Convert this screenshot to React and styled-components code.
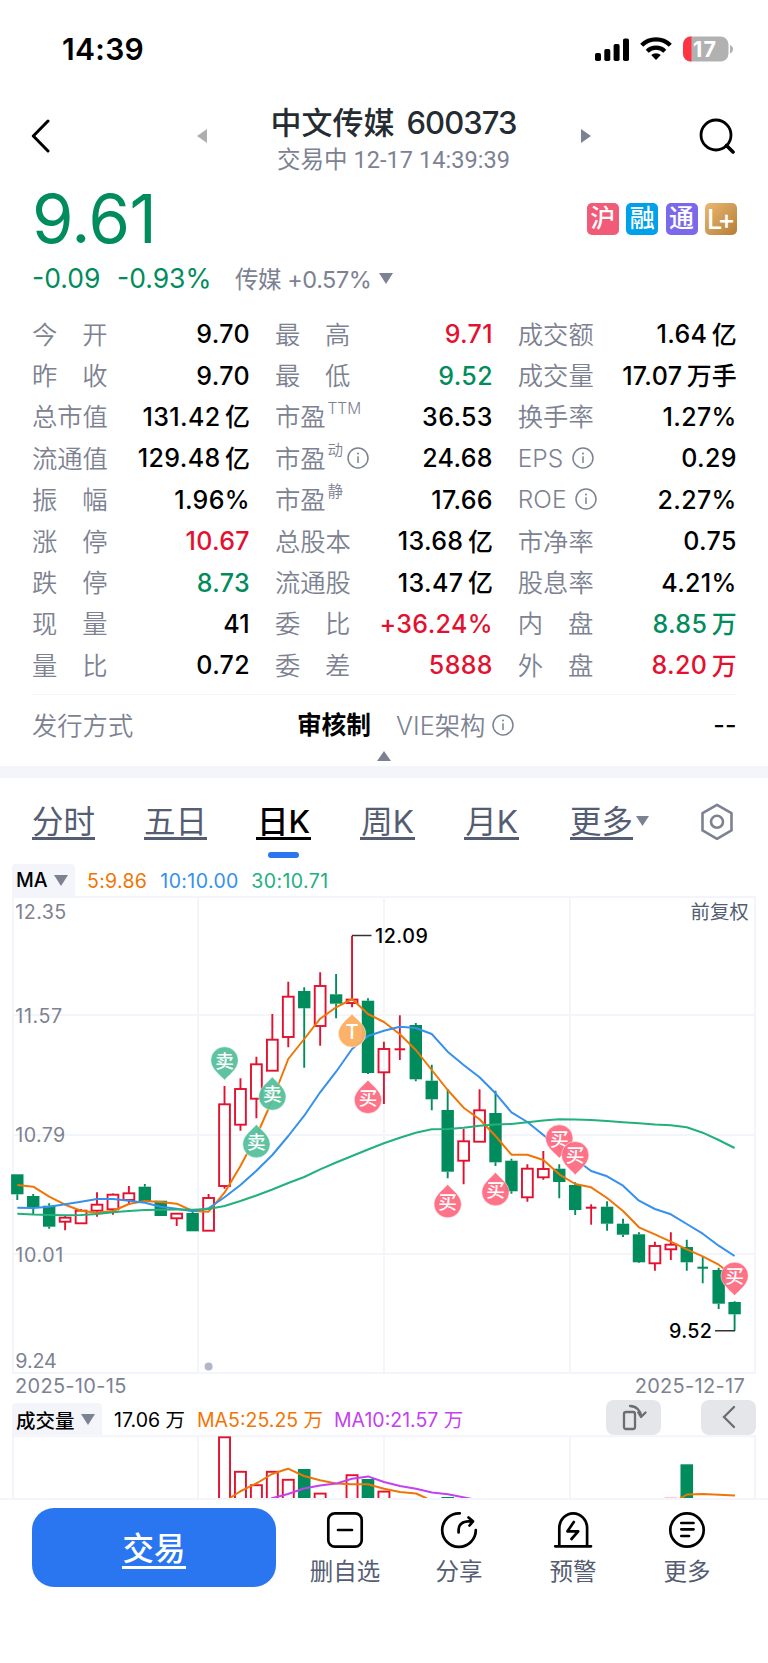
import React from 'react';
import styled, { createGlobalStyle } from 'styled-components';

const C = {
  green: '#008c5c',
  red: '#e3112f',
  ink: '#000',
  title: '#252c31',
  gray: '#7d8292',
  slate: '#555d73',
  line: '#f4f5fa',
  blue: '#2a75f0',
  orange: '#ef7606',
  sky: '#3590ee',
  teal: '#22b07d',
  purple: '#c341f0',
};

const Global = createGlobalStyle`
  * { box-sizing: border-box; }
  body { margin: 0; background: #fff; overflow: hidden; }
  svg { display: block; flex: none; }
  svg text { font-family: Inter, "Noto Sans CJK SC", sans-serif; }
`;

const Page = styled.div`
  width: 768px;
  height: 1663px;
  overflow: hidden;
  display: flex;
  flex-direction: column;
  background: #fff;
  color: ${C.ink};
  font-family: Inter, "Noto Sans CJK SC", sans-serif;
  white-space: nowrap;
`;

const StatusBar = styled.div`
  height: 98px;
  flex: none;
  display: flex;
  justify-content: space-between;
  align-items: center;
  padding: 0 34px 0 62px;
`;
const Clock = styled.span`
  font-size: 30px;
  font-weight: 600;
  letter-spacing: 0.3px;
`;
const StatusIcons = styled.div`
  display: flex;
  align-items: center;
  gap: 11px;
`;

const Header = styled.header`
  height: 86px;
  flex: none;
  display: flex;
  align-items: center;
  justify-content: space-between;
  padding: 0 33px 10px 31px;
`;
const Switcher = styled.div`
  width: 394px;
  display: flex;
  align-items: center;
  justify-content: space-between;
  margin-left: 37px;
`;
const TitleBlock = styled.div`
  display: flex;
  flex-direction: column;
  align-items: center;
  padding-top: 8px;
`;
const Title = styled.h1`
  display: flex;
  gap: 12px;
  margin: 0;
  font-size: 31px;
  line-height: 40px;
  font-weight: 500;
  color: ${C.title};
`;
const Code = styled.span`
  letter-spacing: -0.9px;
`;
const Subtitle = styled.div`
  font-family: Roboto, "Noto Sans CJK SC", sans-serif;
  font-size: 23.5px;
  line-height: 34px;
  color: ${C.gray};
  letter-spacing: 0.05px;
`;

const Quote = styled.section`
  height: 129px;
  flex: none;
  padding: 0 31px 0 32px;
`;
const PriceLine = styled.div`
  height: 70px;
  display: flex;
  align-items: center;
  justify-content: space-between;
`;
const Price = styled.span`
  font-size: 67px;
  line-height: 70px;
  color: ${C.green};
  letter-spacing: -0.5px;
`;
const Badges = styled.div`
  display: flex;
  gap: 7.4px;
`;
const Badge = styled.span`
  width: 32px;
  height: 32px;
  border-radius: 5px;
  background: ${(p) => p.$bg};
  color: #fff;
  font-size: ${(p) => (p.$tight ? 27 : 25)}px;
  line-height: ${(p) => (p.$tight ? 34 : 31)}px;
  font-weight: 500;
  letter-spacing: ${(p) => (p.$tight ? '-2.5px' : '0')};
  text-indent: ${(p) => (p.$tight ? '-2px' : '0')};
  text-align: center;
`;
const ChangeLine = styled.div`
  height: 48px;
  display: flex;
  align-items: center;
  color: ${C.green};
  font-size: 26.5px;
`;
const Change = styled.span`
  width: ${(p) => p.$w}px;
`;
const Sector = styled.span`
  display: flex;
  align-items: center;
  gap: 8px;
  color: ${C.gray};
  font-size: 23.5px;
  letter-spacing: -0.45px;
`;

const Stats = styled.section`
  flex: none;
  display: grid;
  grid-template-columns: 218px 218px 219px;
  column-gap: 24.9px;
  grid-auto-rows: 41.4px;
  padding-left: 32px;
`;
const Stat = styled.div`
  display: flex;
  align-items: center;
  justify-content: space-between;
  font-size: 25px;
`;
const Label = styled.span`
  display: flex;
  align-items: center;
  justify-content: ${(p) => (p.$spread ? 'space-between' : 'flex-start')};
  width: ${(p) => (p.$spread ? '75.5px' : 'auto')};
  color: ${C.gray};
  font-size: ${(p) => (p.$latin ? 24.5 : 25.3)}px;
  font-weight: ${(p) => (p.$latin ? 300 : 350)};
  gap: ${(p) => (p.$latin ? 8.5 : 0)}px;
`;
const Han = styled.span`
  margin-top: ${(p) => (p.$latin ? 0 : -2)}px;
`;
const Sup = styled.sup`
  font-size: 15.5px;
  line-height: 16px;
  margin: -14px 4px 0 2px;
`;
const Value = styled.span`
  color: ${(p) => p.$color || C.ink};
  font-weight: 500;
  font-size: 25px;
  letter-spacing: 0.35px;
  padding-top: 1px;
  display: flex;
  align-items: center;
  gap: 4.5px;
`;
const Unit = styled.span`
  margin-top: -3px;
  letter-spacing: 0;
`;

const Rule = styled.div`
  height: 1px;
  flex: none;
  margin: 8px 32px 0;
  background: ${C.line};
`;
const IssueRow = styled.div`
  height: 56px;
  flex: none;
  display: grid;
  grid-template-columns: 339px 1fr;
  grid-auto-rows: 60px;
  column-gap: 25px;
  padding: 0 31px 0 32px;
`;
const Bold = styled.span`
  font-weight: 600;
  font-size: 24.7px;
  margin-top: -3px;
`;
const InfoGap = styled.i`
  width: 7px;
`;
const Collapse = styled.div`
  height: 15px;
  flex: none;
  display: flex;
  justify-content: center;
  align-items: flex-start;
`;
const Band = styled.div`
  height: 12px;
  flex: none;
  background: ${C.line};
`;

const Tabs = styled.nav`
  height: 87px;
  flex: none;
  display: flex;
  align-items: flex-start;
  gap: 49px;
  padding: 24px 34px 0 32px;
`;
const Tab = styled.div`
  width: ${(p) => p.$w}px;
  display: flex;
  flex-direction: column;
  align-items: center;
  color: ${(p) => (p.$on ? C.ink : C.slate)};
  font-weight: ${(p) => (p.$on ? 500 : 400)};
  font-size: 31.5px;
`;
const TabText = styled.span`
  width: 100%;
  height: 38px;
  line-height: 40px;
  border-bottom: 3px solid currentColor;
  text-align: center;
`;
const TabMark = styled.i`
  width: 31px;
  height: 6px;
  margin-top: 12px;
  border-radius: 3px;
  background: ${C.blue};
`;
const MoreTab = styled.div`
  display: flex;
  align-items: center;
  gap: 3px;
  margin-left: 2px;
  color: ${C.slate};
  font-size: 31.5px;
`;
const Settings = styled.div`
  margin-left: auto;
`;

const Legend = styled.div`
  height: ${(p) => p.$h}px;
  flex: none;
  display: flex;
  align-items: flex-end;
  padding: 0 12px;
  font-size: 19.5px;
`;
const Picker = styled.div`
  height: 32px;
  width: ${(p) => p.$w}px;
  display: flex;
  align-items: center;
  justify-content: space-between;
  padding: 1px 7px 0 4px;
  border-radius: 4px 4px 0 0;
  background: ${C.line};
  font-weight: 500;
  margin-right: 12px;
`;
const LegendItem = styled.span`
  line-height: 30px;
  color: ${(p) => p.$color};
  width: ${(p) => p.$w}px;
  letter-spacing: ${(p) => p.$ls || 0}px;
`;
const ToolButton = styled.div`
  width: 55px;
  height: 35px;
  border-radius: 8px;
  background: #e5e6ea;
  display: flex;
  align-items: center;
  justify-content: center;
  margin-left: ${(p) => (p.$push ? 'auto' : '40px')};
`;
const Dates = styled.div`
  height: 30px;
  flex: none;
  display: flex;
  justify-content: space-between;
  padding: 0 23px 0 15px;
  color: ${C.gray};
  font-size: 20px;
  line-height: 25px;
  letter-spacing: 0.3px;
`;

const BottomBar = styled.footer`
  flex: 1;
  border-top: 2px solid ${C.line};
  background: #fff;
  display: flex;
  align-items: flex-start;
  padding: 8px 24px 0 32px;
`;
const TradeButton = styled.button`
  width: 244px;
  height: 79px;
  border: 0;
  padding: 3px 0 0 0;
  border-radius: 22px;
  background: ${C.blue};
  color: #fff;
  font: 500 31.5px/39px Inter, "Noto Sans CJK SC", sans-serif;
  margin-right: 12px;
`;
const TradeText = styled.span`
  display: inline-block;
  height: 40px;
  border-bottom: 3px solid #fff;
`;
const Action = styled.div`
  width: 114px;
  display: flex;
  flex-direction: column;
  align-items: center;
  padding-top: 3px;
  color: ${C.slate};
  font-size: 23.5px;
  line-height: 34px;
  gap: 6.5px;
`;

const Tri = ({ dir = 'down', w = 14, h = 11, color = C.gray }) => {
  const pts = {
    down: `0,0 ${w},0 ${w / 2},${h}`,
    up: `0,${h} ${w},${h} ${w / 2},0`,
    left: `${w},0 ${w},${h} 0,${h / 2}`,
    right: `0,0 0,${h} ${w},${h / 2}`,
  }[dir];
  return (
    <svg width={w} height={h}>
      <polygon points={pts} fill={color} />
    </svg>
  );
};

const Info = () => (
  <svg width="22" height="22" viewBox="0 0 22 22" fill="none" stroke={C.gray} strokeWidth="1.5">
    <circle cx="11" cy="11" r="10" />
    <path d="M11 9.2V16" />
    <circle cx="11" cy="6.6" r="1" fill={C.gray} stroke="none" />
  </svg>
);

const G = C.green;
const R = C.red;

const stats = [
  ['今开', '9.70'], ['最高', '9.71', R], ['成交额', '1.64', null, '亿'],
  ['昨收', '9.70'], ['最低', '9.52', G], ['成交量', '17.07', null, '万手'],
  ['总市值', '131.42', null, '亿'], ['市盈', '36.53', null, null, { sup: 'TTM' }], ['换手率', '1.27%'],
  ['流通值', '129.48', null, '亿'], ['市盈', '24.68', null, null, { sup: '动', info: true }], ['EPS', '0.29', null, null, { latin: true, info: true }],
  ['振幅', '1.96%'], ['市盈', '17.66', null, null, { sup: '静' }], ['ROE', '2.27%', null, null, { latin: true, info: true }],
  ['涨停', '10.67', R], ['总股本', '13.68', null, '亿'], ['市净率', '0.75'],
  ['跌停', '8.73', G], ['流通股', '13.47', null, '亿'], ['股息率', '4.21%'],
  ['现量', '41'], ['委比', '+36.24%', R], ['内盘', '8.85', G, '万'],
  ['量比', '0.72'], ['委差', '5888', R], ['外盘', '8.20', R, '万'],
];

const StatCell = ({ data }) => {
  const [label, value, color, unit, opt = {}] = data;
  const spread = label.length === 2 && !opt.sup;
  return (
    <Stat>
      <Label $spread={spread} $latin={opt.latin}>
        {spread ? [...label].map((ch) => <Han key={ch}>{ch}</Han>) : <Han $latin={opt.latin}>{label}</Han>}
        {opt.sup && <Sup>{opt.sup}</Sup>}
        {opt.info && <Info />}
      </Label>
      <Value $color={color}>
        <span>{value}</span>
        {unit && <Unit>{unit}</Unit>}
      </Value>
    </Stat>
  );
};

/* Plot coordinates share one vertical origin: y0 of each svg's viewBox. */
const cx = (i) => 17.3 + 15.94 * i;

/* kind, body top, body bottom, wick top, wick bottom */
const candles = [
  ['g', 1174.3, 1194.3, 1174.3, 1200], ['g', 1196, 1207.3, 1194, 1214], ['g', 1205.7, 1226.7, 1203.3, 1228.7],
  ['r', 1217.7, 1221.7, 1216, 1230.3], ['r', 1210.7, 1223.3, 1209, 1223.3], ['r', 1204.7, 1210.7, 1192.3, 1216.7],
  ['r', 1194.7, 1209.3, 1193.5, 1214.7], ['r', 1193.3, 1200, 1186, 1205], ['g', 1186.7, 1201.3, 1184, 1201.3],
  ['g', 1200.7, 1216, 1200.7, 1216], ['r', 1213.7, 1218.3, 1213, 1226], ['g', 1213, 1231.3, 1210.7, 1231.3],
  ['r', 1198, 1230.7, 1194, 1230.7], ['r', 1104.3, 1186, 1086, 1188.7], ['r', 1089, 1124.7, 1078.3, 1130.7],
  ['r', 1064.3, 1098.7, 1056.7, 1118.3], ['r', 1039.7, 1070.7, 1014, 1070.7], ['r', 996.7, 1037, 981.7, 1047.3],
  ['g', 991, 1008.3, 987.3, 1067.7], ['r', 986, 1026, 972.3, 1045.7], ['g', 994.3, 1003.7, 974, 1018.3],
  ['r', 999.6, 1003, 935.7, 1007.3], ['g', 1000.7, 1073, 998.3, 1074], ['r', 1049, 1072.3, 1041.7, 1104],
  ['r', 1049.3, 1049.3, 1015.3, 1060], ['g', 1025, 1079.3, 1023, 1081.3], ['g', 1080.7, 1099.3, 1064.7, 1110.3],
  ['g', 1110, 1171.7, 1089, 1178.3], ['r', 1141.3, 1160.7, 1129, 1184.3], ['r', 1110.3, 1141.7, 1089.3, 1141.7],
  ['g', 1113, 1162.3, 1090.7, 1166], ['g', 1160.7, 1191.3, 1158.7, 1193.7], ['r', 1168.7, 1197.3, 1164.3, 1201.7],
  ['r', 1169, 1177.3, 1151, 1179.7], ['g', 1168.7, 1182, 1164.3, 1198.3], ['g', 1185, 1210, 1182.3, 1215],
  ['r', 1207.7, 1207.7, 1204.3, 1224.7], ['g', 1206.7, 1223.7, 1201.3, 1230.7], ['g', 1223.7, 1234.7, 1218.7, 1237],
  ['g', 1234.3, 1262.3, 1232.3, 1263], ['r', 1246, 1263.3, 1241.7, 1270.7], ['r', 1244.7, 1249.3, 1232.3, 1260],
  ['g', 1247, 1262.3, 1239.7, 1270.7], ['g', 1267.7, 1267.7, 1256, 1283.3], ['g', 1270, 1303.7, 1267.7, 1309],
  ['g', 1302, 1314.3, 1301.3, 1330.7],
];

const ma5 = [1185, 1186.7, 1196.7, 1204.7, 1210.7, 1212.7, 1211, 1204, 1201, 1202, 1203.7, 1211, 1211.7, 1192.7, 1166, 1136, 1100, 1059, 1039, 1018.7, 1007.3, 999, 1014, 1022, 1034.3, 1050, 1070, 1090, 1107.7, 1119.3, 1136, 1154.7, 1154.7, 1160, 1174.3, 1184, 1187.3, 1198, 1211, 1227.3, 1234.3, 1241.7, 1249.3, 1256.3, 1264.7, 1276.7];
const ma10 = [1207.7, 1208, 1206.7, 1204.3, 1201.7, 1199, 1199, 1200.7, 1202.7, 1206.7, 1208.7, 1211.3, 1208.3, 1197.3, 1185, 1170.7, 1155, 1136, 1115.7, 1092.3, 1071.7, 1049, 1036, 1030.7, 1026.7, 1028, 1034, 1051.7, 1065, 1077.3, 1093.3, 1112.3, 1122, 1135, 1148, 1159, 1171, 1176.3, 1185.7, 1200.7, 1209, 1214.3, 1224, 1233.7, 1245.7, 1256];
const ma30 = [1213.7, 1214.6, 1215, 1215.3, 1215, 1214, 1212.3, 1211, 1210, 1209.7, 1209.6, 1209.7, 1209, 1206, 1201, 1195.5, 1189.5, 1183, 1177, 1169.3, 1162.5, 1156, 1149.5, 1143.3, 1137.7, 1132.7, 1129.3, 1129, 1127.7, 1125.7, 1124.4, 1124, 1122.3, 1120.5, 1119.3, 1119.5, 1120, 1121, 1122.2, 1123.3, 1124.5, 1125.3, 1127.3, 1132.7, 1140, 1148];

const toPoints = (ys) => ys.map((y, i) => `${cx(i)},${y}`).join(' ');

const Candle = ({ i, d: [kind, top, bottom, hi, lo] }) => {
  const x = cx(i);
  const color = kind === 'g' ? G : R;
  if (top === bottom) {
    return (
      <g fill={color}>
        <rect x={x - 5.3} y={top - 1} width="10.6" height="2" />
        <rect x={x - 0.9} y={hi} width="1.8" height={lo - hi} />
      </g>
    );
  }
  return (
    <g>
      <path d={`M${x} ${hi}V${top}M${x} ${bottom}V${lo}`} stroke={color} strokeWidth="1.9" />
      {kind === 'g' ? (
        <rect x={x - 6.2} y={top} width="12.4" height={bottom - top} fill={color} />
      ) : (
        <rect x={x - 5.4} y={top} width="10.8" height={bottom - top} fill="none" stroke={color} strokeWidth="1.9" />
      )}
    </g>
  );
};

/* Trade pins: text, fill, candle index, y of the tip, tip direction */
const pins = [
  ['卖', '#55c09b', 13, 1080.3, 'down'], ['卖', '#55c09b', 16, 1076.7, 'up'], ['卖', '#55c09b', 15, 1124.3, 'up'],
  ['T', '#fdae62', 21, 1013.7, 'up'], ['买', '#ff6b82', 22, 1080, 'up'], ['买', '#ff6b82', 27, 1184.3, 'up'],
  ['买', '#ff6b82', 30, 1172.3, 'up'], ['买', '#ff6b82', 34, 1158.3, 'down'], ['买', '#ff6b82', 35, 1175, 'down'],
  ['买', '#ff6b82', 45, 1295.7, 'down'],
];
const Pin = ({ d: [ch, fill, i, tip, dir] }) => {
  const s = dir === 'up' ? 1 : -1;
  return (
    <g transform={`translate(${cx(i)} ${tip})`}>
      <path
        transform={`scale(1 ${s})`}
        d="M0 0C2 3.6 13.7 10.5 13.7 19.8A13.7 13.7 0 0 1 -13.7 19.8C-13.7 10.5 -2 3.6 0 0Z"
        fill={fill}
        fillOpacity="0.95"
        stroke="#fff"
        strokeOpacity="0.7"
        strokeWidth="0.7"
      />
      <text y={s * 18.6 + (ch === 'T' ? 6.6 : 6)} fontSize={ch === 'T' ? 20 : 18.7} fontWeight="500" fill="#fff" textAnchor="middle">
        {ch}
      </text>
    </g>
  );
};

const GRID_X = [13, 198, 384, 570, 755];

const PriceChart = () => (
  <svg width="768" height="478" viewBox="0 896 768 478">
    <g stroke={C.line} strokeWidth="2">
      {GRID_X.map((x) => <path key={x} d={`M${x} 896V1374`} />)}
      {[897, 1015, 1135, 1254, 1373].map((y) => <path key={y} d={`M12 ${y}H756`} />)}
    </g>
    <g fill={C.gray} fontSize="19.7">
      <text x="15.3" y="919.3" textLength="51">12.35</text>
      <text x="15.3" y="1022.7" textLength="46.8">11.57</text>
      <text x="15.3" y="1142.3" textLength="50">10.79</text>
      <text x="15.3" y="1262" textLength="48">10.01</text>
      <text x="15.3" y="1368" textLength="41.5">9.24</text>
    </g>
    <text x="690.5" y="919.2" fontSize="19.4" fill={C.slate}>前复权</text>
    <circle cx="208.6" cy="1366.4" r="4" fill="#b1b7c6" />
    {candles.map((d, i) => <Candle key={i} i={i} d={d} />)}
    <g fill="none" strokeWidth="2" strokeLinejoin="round">
      <polyline points={toPoints(ma5)} stroke={C.orange} />
      <polyline points={toPoints(ma10)} stroke={C.sky} />
      <polyline points={toPoints(ma30)} stroke={C.teal} />
    </g>
    {pins.map((d) => <Pin key={d[2]} d={d} />)}
    <path d="M352 935.5H371.5M715 1330.8H735" stroke="#333" strokeWidth="1.4" />
    <g fontSize="19.7" fontWeight="500">
      <text x="375" y="942.7" textLength="53">12.09</text>
      <text x="669" y="1338" textLength="43">9.52</text>
    </g>
  </svg>
);

const volumes = [
  [13, 'r', 1437.3], [14, 'r', 1471.8], [15, 'r', 1485.2], [16, 'r', 1471.8], [17, 'r', 1479.8], [18, 'g', 1469],
  [19, 'r', 1493.6], [21, 'r', 1475.2], [22, 'g', 1479], [23, 'r', 1491.6], [27, 'g', 1497], [42, 'g', 1464.3],
];

const VolumeChart = () => (
  <svg width="768" height="63" viewBox="0 1435 768 63">
    <g stroke={C.line} strokeWidth="2">
      {GRID_X.map((x) => <path key={x} d={`M${x} 1435V1498`} />)}
      <path d="M12 1436.3H756" />
    </g>
    {volumes.map(([i, k, y]) =>
      k === 'g' ? (
        <rect key={i} x={cx(i) - 6.3} y={y} width="12.6" height="40" fill={G} />
      ) : (
        <rect key={i} x={cx(i) - 5.5} y={y} width="11" height="70" fill="none" stroke={R} strokeWidth="1.9" />
      )
    )}
    <rect x={cx(41) - 6.3} y="1496.8" width="12.6" height="3" fill="#f7d3d9" />
    <g fill="none" strokeWidth="2" strokeLinejoin="round">
      <polyline stroke={C.orange} points="230,1498 240,1491.5 258,1482.5 272,1474 288,1468.7 304,1476 320,1480.3 336,1483.6 352,1484.3 368,1484.3 384,1488.7 400,1492 416,1493.5 427,1498.5" />
      <polyline stroke={C.orange} points="680,1498.5 687,1494.5 703,1494 735,1495.4" />
      <polyline stroke={C.purple} points="271,1498.5 288,1494 304,1488.5 320,1485.6 336,1483.6 352,1478.7 368,1476.4 384,1482 400,1486 416,1488.7 432,1492.5 448,1494.3 472,1499" />
    </g>
  </svg>
);

const strokeIcon = {
  width: 40,
  height: 38,
  viewBox: '0 0 40 38',
  fill: 'none',
  stroke: '#000',
  strokeWidth: 2.7,
  strokeLinecap: 'round',
  strokeLinejoin: 'round',
};

export default function App() {
  return (
    <Page>
      <Global />
      <StatusBar>
        <Clock>14:39</Clock>
        <StatusIcons>
          <svg width="34" height="23" viewBox="0 0 34 23">
            <rect x="0" y="15" width="6" height="8" rx="1.8" />
            <rect x="9.3" y="11" width="6" height="12" rx="1.8" />
            <rect x="18.6" y="6" width="6" height="17" rx="1.8" />
            <rect x="28" y="0.5" width="6" height="22.5" rx="1.8" />
          </svg>
          <svg width="32" height="24" viewBox="0 0 32 24">
            <g fill="none" stroke="#000" strokeWidth="4.3">
              <path d="M1.7 8.2A20.5 20.5 0 0 1 30.3 8.2" />
              <path d="M7.2 14.2A12.7 12.7 0 0 1 24.8 14.2" />
            </g>
            <path d="M16 23L11.2 18.1A6.9 6.9 0 0 1 20.8 18.1Z" />
          </svg>
          <svg width="51" height="26" viewBox="0 0 51 26">
            <clipPath id="cell"><rect width="45.5" height="25" y="0.5" rx="8" /></clipPath>
            <g clipPath="url(#cell)">
              <rect width="46" height="26" fill="#b1b1b1" />
              <rect width="8.5" height="26" fill="#ff3440" />
            </g>
            <path d="M47 9C51 10.2 51 16.2 47 17.4Z" fill="#b1b1b1" />
            <text x="10" y="20.6" fontSize="21.5" fontWeight="700" fill="#fff" textLength="23">17</text>
          </svg>
        </StatusIcons>
      </StatusBar>

      <Header>
        <svg width="20" height="34" viewBox="0 0 20 34" fill="none" stroke="#000" strokeWidth="3" strokeLinecap="round" strokeLinejoin="round">
          <path d="M17 2L2.3 17L17 32" />
        </svg>
        <Switcher>
          <Tri dir="left" w={10} h={14} color="#aeaeb0" />
          <TitleBlock>
            <Title><span>中文传媒</span><Code>600373</Code></Title>
            <Subtitle>交易中 12-17 14:39:39</Subtitle>
          </TitleBlock>
          <Tri dir="right" w={10} h={14} />
        </Switcher>
        <svg width="36" height="36" viewBox="0 0 36 36" fill="none" stroke="#000" strokeWidth="2.8">
          <circle cx="17" cy="17" r="15" />
          <path d="M27.5 27.5L34 34" strokeWidth="3.6" strokeLinecap="round" />
        </svg>
      </Header>

      <Quote>
        <PriceLine>
          <Price>9.61</Price>
          <Badges>
            <Badge $bg="#f25b77">沪</Badge>
            <Badge $bg="#00a1ea">融</Badge>
            <Badge $bg="#7b68ea">通</Badge>
            <Badge $bg="linear-gradient(135deg, #ecb870, #b47e38)" $tight>L+</Badge>
          </Badges>
        </PriceLine>
        <ChangeLine>
          <Change $w={85}>-0.09</Change>
          <Change $w={118}>-0.93%</Change>
          <Sector>
            <span>传媒 +0.57%</span>
            <Tri />
          </Sector>
        </ChangeLine>
      </Quote>

      <Stats>
        {stats.map((d, i) => <StatCell key={i} data={d} />)}
      </Stats>
      <Rule />
      <IssueRow>
        <Stat>
          <Label><Han>发行方式</Han></Label>
          <Bold>审核制</Bold>
        </Stat>
        <Stat>
          <Label><Han>VIE架构</Han><InfoGap /><Info /></Label>
          <Value>--</Value>
        </Stat>
      </IssueRow>
      <Collapse><Tri dir="up" w={14} h={10} /></Collapse>
      <Band />

      <Tabs>
        <Tab $w={63}><TabText>分时</TabText></Tab>
        <Tab $w={63}><TabText>五日</TabText></Tab>
        <Tab $w={55} $on><TabText>日K</TabText><TabMark /></Tab>
        <Tab $w={55}><TabText>周K</TabText></Tab>
        <Tab $w={55}><TabText>月K</TabText></Tab>
        <MoreTab><TabText>更多</TabText><Tri w={13} h={10} /></MoreTab>
        <Settings>
          <svg width="34" height="38" viewBox="0 0 34 38" fill="none" stroke={C.gray} strokeWidth="2.6" strokeLinejoin="round">
            <path d="M17 2.8L31.5 11.2V28.4L17 36.8L2.5 28.4V11.2Z" />
            <circle cx="17" cy="19.8" r="6" />
          </svg>
        </Settings>
      </Tabs>

      <Legend $h={31}>
        <Picker $w={63}>MA<Tri /></Picker>
        <LegendItem $color={C.orange} $w={73.3} $ls={0.3}>5:9.86</LegendItem>
        <LegendItem $color={C.sky} $w={91} $ls={0.4}>10:10.00</LegendItem>
        <LegendItem $color={C.teal} $w={90} $ls={0.4}>30:10.71</LegendItem>
      </Legend>
      <PriceChart />
      <Dates>
        <span>2025-10-15</span>
        <span>2025-12-17</span>
      </Dates>
      <Legend $h={31}>
        <Picker $w={90}>成交量<Tri /></Picker>
        <LegendItem $w={83}>17.06 万</LegendItem>
        <LegendItem $color={C.orange} $w={137}>MA5:25.25 万</LegendItem>
        <LegendItem $color={C.purple} $w={140}>MA10:21.57 万</LegendItem>
        <ToolButton $push>
          <svg width="26" height="28" viewBox="0 0 26 28" fill="none" stroke="#6d6d6f" strokeWidth="2.3" strokeLinecap="round" strokeLinejoin="round">
            <rect x="3" y="9" width="11" height="17" rx="2" />
            <path d="M9 3C15 3 19.5 7.5 20 13M17.3 9.5L20 14L24.5 9.5" />
          </svg>
        </ToolButton>
        <ToolButton>
          <svg width="14" height="24" viewBox="0 0 14 24" fill="none" stroke="#6d6d6f" strokeWidth="2.3" strokeLinecap="round">
            <path d="M12 2L2 12L12 22" />
          </svg>
        </ToolButton>
      </Legend>
      <VolumeChart />

      <BottomBar>
        <TradeButton><TradeText>交易</TradeText></TradeButton>
        <Action>
          <svg {...strokeIcon}>
            <rect x="3.3" y="2.3" width="33.4" height="33.4" rx="6.5" />
            <path d="M13 19H27" />
          </svg>
          删自选
        </Action>
        <Action>
          <svg {...strokeIcon}>
            <path d="M20.8 2.3A16.8 16.8 0 1 0 36.8 19" />
            <path d="M19.6 21.5V18.5Q20 9.8 33 10.2M29.5 6.5L34 10.3L30.5 14.5" />
          </svg>
          分享
        </Action>
        <Action>
          <svg {...strokeIcon}>
            <path d="M2.2 35.3H38M6.3 35V17A13.9 14.7 0 0 1 34.1 17V35" />
            <path d="M20.8 11L14.5 20.3H25.2L18.5 28" />
          </svg>
          预警
        </Action>
        <Action>
          <svg {...strokeIcon}>
            <circle cx="20" cy="19" r="16.7" />
            <path d="M14.3 12H26.5M14.3 18.3H26.5M14.3 25H22" />
          </svg>
          更多
        </Action>
      </BottomBar>
    </Page>
  );
}
